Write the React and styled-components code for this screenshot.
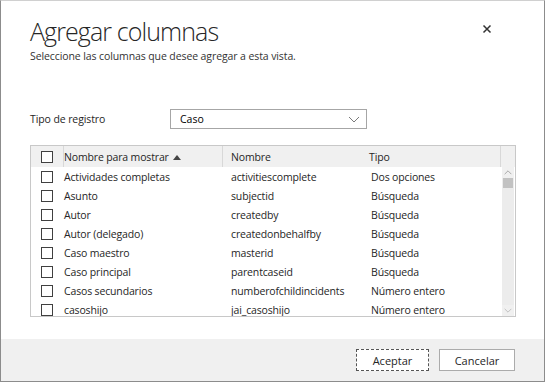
import React from 'react';
import styled, { createGlobalStyle } from 'styled-components';

const Global = createGlobalStyle`
  body {
    margin: 0;
    background: #fff;
    font-family: "Open Sans", "Liberation Sans", sans-serif;
  }
`;

const Dialog = styled.div`
  box-sizing: border-box;
  width: 545px;
  height: 382px;
  border: 1px solid #8c8c8c;
  border-top-color: #d0d0d0;
  display: flex;
  flex-direction: column;
  background: #fff;
  color: #262626;
`;

const Body = styled.div`
  flex: 1;
  padding: 12px 29px 0 29px;
  display: flex;
  flex-direction: column;
`;

const Header = styled.div`
  display: flex;
  justify-content: space-between;
  align-items: flex-start;
`;

const Title = styled.h1`
  margin: 0;
  font-size: 25px;
  font-weight: 300;
  line-height: 36px;
  color: #262626;
  letter-spacing: -0.9px;
`;

const Close = styled.button`
  border: 0;
  background: none;
  padding: 0;
  margin: 11px 21px 0 0;
  width: 12px;
  height: 12px;
  display: flex;
`;

const Sub = styled.p`
  margin: 0;
  font-size: 10.5px;
  letter-spacing: -0.1px;
  color: #333;
`;

const Field = styled.div`
  display: flex;
  align-items: center;
  margin-top: 46px;
`;

const Label = styled.span`
  width: 140px;
  font-size: 10.5px;
  letter-spacing: -0.1px;
  color: #262626;
`;

const Select = styled.div`
  box-sizing: border-box;
  width: 197px;
  height: 20px;
  border: 1px solid #a6a6a6;
  display: flex;
  align-items: center;
  justify-content: space-between;
  padding: 0 6px 0 9px;
  font-size: 10.5px;
  color: #000;
`;

const Grid = styled.div`
  box-sizing: border-box;
  margin-top: 16px;
  width: 486px;
  height: 172px;
  border: 1px solid #c8c8c8;
  display: flex;
  flex-direction: column;
  font-size: 10.5px;
  letter-spacing: -0.15px;
  overflow: hidden;
`;

const HeadRow = styled.div`
  display: grid;
  grid-template-columns: 33px 159px 139px 139px 1fr;
  align-items: center;
  height: 21px;
  flex: none;
  background: #f0f0f0;
  color: #262626;
`;

const HeadCell = styled.div`
  height: 100%;
  display: flex;
  align-items: center;
  padding-left: ${p => p.$pad || 0}px;
  border-right: ${p => (p.$sep ? '1px solid #d8d8d8' : '0')};
  box-sizing: border-box;
  gap: 4px;
`;

const Rows = styled.div`
  flex: 1;
  display: flex;
  overflow: hidden;
`;

const List = styled.div`
  flex: 1;
`;

const Row = styled.div`
  display: grid;
  grid-template-columns: 33px 167px 140px 1fr;
  align-items: center;
  height: 19px;
  color: #262626;
`;

const Cell = styled.div`
  white-space: nowrap;
`;

const Box = styled.span`
  box-sizing: border-box;
  display: block;
  width: 12px;
  height: 12px;
  border: 1px solid #404040;
  background: #fff;
  margin-left: 10px;
`;

const Scroll = styled.div`
  width: 12px;
  margin-right: 1px;
  background: #ececec;
  display: flex;
  flex-direction: column;
  align-items: center;
`;

const Arrow = styled.div`
  height: 11px;
  width: 12px;
  display: flex;
  align-items: center;
  justify-content: center;
  background: #f0f0f0;
`;

const Thumb = styled.div`
  width: 10px;
  height: 10px;
  background: #c2c2c2;
`;

const Track = styled.div`
  flex: 1;
`;

const Footer = styled.div`
  height: 42px;
  background: #f0f0f0;
  display: flex;
  justify-content: flex-end;
  align-items: center;
  gap: 10px;
  padding: 0 29px 0 0;
`;

const Button = styled.button`
  box-sizing: border-box;
  width: ${p => p.$w}px;
  height: 22px;
  background: #fff;
  border: 1px ${p => (p.$focus ? 'dashed #555' : 'solid #ababab')};
  font-family: inherit;
  font-size: 11px;
  color: #262626;
  padding: 0;
`;

const rows = [
  ['Actividades completas', 'activitiescomplete', 'Dos opciones'],
  ['Asunto', 'subjectid', 'Búsqueda'],
  ['Autor', 'createdby', 'Búsqueda'],
  ['Autor (delegado)', 'createdonbehalfby', 'Búsqueda'],
  ['Caso maestro', 'masterid', 'Búsqueda'],
  ['Caso principal', 'parentcaseid', 'Búsqueda'],
  ['Casos secundarios', 'numberofchildincidents', 'Número entero'],
  ['casoshijo', 'jai_casoshijo', 'Número entero'],
];

const Chevron = ({ up, size = 12, color = '#7a7a7a' }) => (
  <svg width={size} height={size / 2 + 1} viewBox="0 0 12 7">
    <path d={up ? 'M1 6 L6 1 L11 6' : 'M1 1 L6 6 L11 1'} fill="none" stroke={color} strokeWidth="1" />
  </svg>
);

export default function App() {
  return (
    <>
      <Global />
      <Dialog>
        <Body>
          <Header>
            <Title>Agregar columnas</Title>
            <Close aria-label="Cerrar">
              <svg width="10" height="10" viewBox="0 0 10 10">
                <path d="M1.5 1.5 L8.5 8.5 M8.5 1.5 L1.5 8.5" stroke="#333" strokeWidth="1.5" />
              </svg>
            </Close>
          </Header>
          <Sub>Seleccione las columnas que desee agregar a esta vista.</Sub>
          <Field>
            <Label>Tipo de registro</Label>
            <Select>
              <span>Caso</span>
              <Chevron />
            </Select>
          </Field>
          <Grid>
            <HeadRow>
              <HeadCell $sep><Box /></HeadCell>
              <HeadCell $sep>
                Nombre para mostrar
                <svg width="8" height="6" viewBox="0 0 8 6"><path d="M0 6 L4 1 L8 6 Z" fill="#444" /></svg>
              </HeadCell>
              <HeadCell $pad={8}>Nombre</HeadCell>
              <HeadCell $sep $pad={7}>Tipo</HeadCell>
              <HeadCell />
            </HeadRow>
            <Rows>
              <List>
                {rows.map(r => (
                  <Row key={r[1]}>
                    <Cell><Box /></Cell>
                    <Cell>{r[0]}</Cell>
                    <Cell>{r[1]}</Cell>
                    <Cell>{r[2]}</Cell>
                  </Row>
                ))}
              </List>
              <Scroll>
                <Arrow><Chevron up size={8} color="#888" /></Arrow>
                <Thumb />
                <Track />
                <Arrow><Chevron size={8} color="#aaa" /></Arrow>
              </Scroll>
            </Rows>
          </Grid>
        </Body>
        <Footer>
          <Button $w={73} $focus>Aceptar</Button>
          <Button $w={76}>Cancelar</Button>
        </Footer>
      </Dialog>
    </>
  );
}
